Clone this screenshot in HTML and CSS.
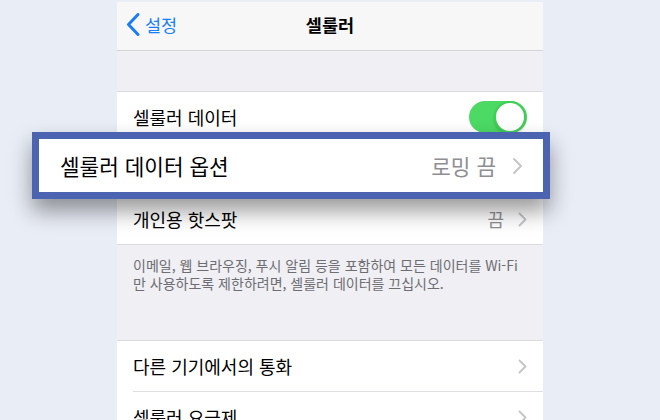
FILE: index.html
```html
<!DOCTYPE html>
<html lang="ko">
<head>
<meta charset="utf-8">
<title>셀룰러</title>
<link rel="stylesheet" href="styles.css">
</head>
<body>
<div class="stage">
  <div class="phone">
    <header class="nav">
      <a class="back">
        <svg class="back-icon" width="14" height="23" viewBox="0 0 14 23"><polyline points="12,1.5 2.5,11.5 12,21.5" fill="none" stroke="#1a7cf6" stroke-width="3" stroke-linecap="round" stroke-linejoin="round"/></svg>
        <span>설정</span>
      </a>
      <h1 class="title">셀룰러</h1>
    </header>
    <div class="spacer"></div>
    <ul class="group">
      <li class="row">
        <span class="label">셀룰러 데이터</span>
        <span class="switch"><span class="knob"></span></span>
      </li>
      <li class="row">
        <span class="label">셀룰러 데이터 옵션</span>
        <span class="value">로밍 끔</span>
        <svg class="chev" width="9" height="15" viewBox="0 0 9 15"><polyline points="1.5,1.5 7.5,7.5 1.5,13.5" fill="none" stroke="#c4c4c9" stroke-width="1.8" stroke-linecap="round" stroke-linejoin="round"/></svg>
      </li>
      <li class="row">
        <span class="label">개인용 핫스팟</span>
        <span class="value">끔</span>
        <svg class="chev" width="9" height="15" viewBox="0 0 9 15"><polyline points="1.5,1.5 7.5,7.5 1.5,13.5" fill="none" stroke="#c4c4c9" stroke-width="1.8" stroke-linecap="round" stroke-linejoin="round"/></svg>
      </li>
    </ul>
    <p class="footer">이메일, 웹 브라우징, 푸시 알림 등을 포함하여 모든 데이터를 Wi-Fi 만 사용하도록 제한하려면, 셀룰러 데이터를 끄십시오.</p>
    <ul class="group">
      <li class="row">
        <span class="label">다른 기기에서의 통화</span>
        <svg class="chev" width="9" height="15" viewBox="0 0 9 15"><polyline points="1.5,1.5 7.5,7.5 1.5,13.5" fill="none" stroke="#c4c4c9" stroke-width="1.8" stroke-linecap="round" stroke-linejoin="round"/></svg>
      </li>
      <li class="row">
        <span class="label">셀룰러 요금제</span>
        <svg class="chev" width="9" height="15" viewBox="0 0 9 15"><polyline points="1.5,1.5 7.5,7.5 1.5,13.5" fill="none" stroke="#c4c4c9" stroke-width="1.8" stroke-linecap="round" stroke-linejoin="round"/></svg>
      </li>
    </ul>
  </div>

  <div class="callout">
    <span class="label">셀룰러 데이터 옵션</span>
    <span class="value">로밍 끔</span>
    <svg class="chev big" width="11" height="18" viewBox="0 0 11 18"><polyline points="2,2 9,9 2,16" fill="none" stroke="#c4c4c9" stroke-width="2" stroke-linecap="round" stroke-linejoin="round"/></svg>
  </div>
</div>
</body>
</html>
```

FILE: styles.css
```css
* { box-sizing: border-box; }

html, body {
  margin: 0;
  padding: 0;
  height: 100%;
}

body {
  background: #e9edf6;
  font-family: "Noto Sans CJK KR", "Noto Sans", sans-serif;
  color: #000;
  overflow: hidden;
}

.stage {
  position: relative;
  width: 660px;
  height: 420px;
  padding-top: 2px;
}

.phone {
  margin-left: 117px;
  width: 426px;
  height: 418px;
  background: #efeff4;
  overflow: hidden;
}

.nav {
  position: relative;
  height: 49px;
  background: #f7f7f8;
  border-bottom: 1px solid #d3d3d8;
  display: flex;
  align-items: center;
  justify-content: center;
}

.back {
  position: absolute;
  left: 9px;
  top: 11px;
  display: flex;
  align-items: center;
  gap: 5px;
  color: #157efb;
  font-size: 17.5px;
  line-height: 23px;
}

.back-icon { display: block; }

.title {
  margin: -4px 0 0;
  font-size: 17.5px;
  font-weight: 600;
  line-height: 23px;
}

.spacer { height: 40px; }

.group {
  list-style: none;
  margin: 0;
  padding: 0 0 0 16px;
  background: #fff;
  border-top: 1px solid #dcdce0;
  border-bottom: 1px solid #dcdce0;
}

.row {
  height: 51px;
  display: flex;
  align-items: center;
  padding-right: 16px;
  border-bottom: 1px solid #e0e0e4;
  font-size: 18px;
}

.row:last-child {
  height: 50px;
  border-bottom: 0;
}

.label { flex: 1; white-space: nowrap; }

.value {
  color: #8e8e93;
  margin-right: 14px;
}

.chev { display: block; flex: none; }

.switch {
  position: relative;
  width: 58px;
  height: 32px;
  border-radius: 16px;
  background: #4cd964;
}

.knob {
  position: absolute;
  right: 1px;
  top: 0;
  width: 32px;
  height: 32px;
  border-radius: 50%;
  background: #fff;
  border: 2px solid #3fcf55;
  box-shadow: 0 2px 3px rgba(0, 0, 0, 0.15);
}

.footer {
  margin: 0;
  height: 95px;
  padding: 11px 12px 0 16px;
  font-size: 14px;
  line-height: 18px;
  color: #6d6d72;
}

.callout {
  position: absolute;
  left: 32px;
  top: 132px;
  width: 518px;
  height: 67px;
  border: 7px solid #4c63b2;
  background: #fff;
  display: flex;
  align-items: center;
  padding: 0 20px 0 21px;
  font-size: 21.3px;
  box-shadow: 0 12px 22px rgba(0, 0, 0, 0.4);
}

.callout .value {
  margin-right: 16px;
}
```
